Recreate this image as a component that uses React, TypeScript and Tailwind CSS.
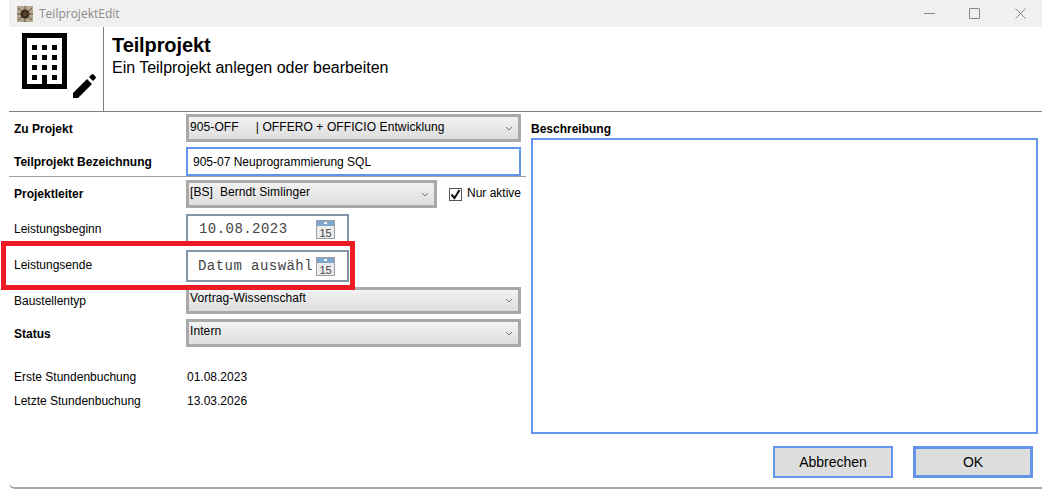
const BuildingIcon = () => (
  <svg width="78" height="68" viewBox="0 0 78 68" className="block">
    <rect x="2.5" y="2.5" width="40" height="51" fill="none" stroke="#000" strokeWidth="5" />
    <g fill="#000">
      {[12, 22, 32, 42].map(y => (
        <g key={y}>
          <rect x="10" y={y} width="5" height="5" />
          <rect x="20" y={y} width="5" height="5" />
          <rect x="30" y={y} width="5" height="5" />
        </g>
      ))}
      <rect x="20" y="42" width="5" height="13" />
    </g>
    <path d="M51 65v-5l14-14 5 5-14 14z M67 44l2.5-2.5q1-1 2 0l2 2q1 1 0 2l-2.5 2.5z" fill="#000" />
  </svg>
);

const AppIcon = () => (
  <svg width="16" height="16" viewBox="0 0 16 16" className="block">
    <rect width="16" height="16" fill="#b5a78f" />
    <circle cx="8" cy="8" r="4.5" fill="#3a2c1e" />
    <circle cx="8" cy="8" r="2" fill="#8a5a2c" />
    <path d="M1 2l14 12M15 2L1 14M8 0v16M0 8h16" stroke="#40352a" strokeWidth="1" opacity="0.7" />
  </svg>
);

const CalendarIcon = () => (
  <svg width="19" height="19" viewBox="0 0 19 19" className="block">
    <rect x="0.5" y="0.5" width="18" height="18" fill="#ececec" stroke="#9aa0a6" />
    <rect x="1" y="1" width="17" height="5" fill="#7fa6cc" />
    <rect x="8" y="2" width="3" height="2" fill="#ffffff" />
    <text x="9.5" y="16.5" textAnchor="middle" fontSize="11" fontFamily="Liberation Sans, sans-serif" fill="#444">15</text>
  </svg>
);

const Chevron = () => (
  <svg width="8" height="5" viewBox="0 0 8 5" className="block shrink-0">
    <path d="M1 1l3 3 3-3" fill="none" stroke="#777" strokeWidth="1" />
  </svg>
);

const SelectBox = ({ text, className }: { text: string; className: string }) => (
  <div className={`flex justify-between h-full border-[3px] border-[#a9a9a9] bg-gradient-to-b from-[#f2f2f2] to-[#dedede] pl-px pr-[5px] ${className}`}>
    <span className="whitespace-pre text-[12px] leading-[14px] pt-[2px] tracking-[0.09px] text-black">{text}</span>
    <span className="self-center"><Chevron /></span>
  </div>
);

const DateBox = ({ text, tight }: { text: string; tight?: boolean }) => (
  <div className={`flex items-center justify-between h-full w-[163px] border-2 border-[#8096a8] bg-white pr-[12px] ${tight ? 'pl-[10px]' : 'pl-[11px]'}`}>
    <span className="font-['Liberation_Mono',monospace] text-[14px] tracking-[0.45px] text-[#444] whitespace-pre">{text}</span>
    <span className="shrink-0"><CalendarIcon /></span>
  </div>
);

const Row = ({ label, bold, className, labelClass, children }: { label: string; bold?: boolean; className: string; labelClass?: string; children: React.ReactNode }) => (
  <div className={`flex ${className}`}>
    <div className={`w-[177px] pl-[5px] self-center text-[12px] leading-[14px] text-black ${bold ? 'font-bold' : ''} ${labelClass ?? ''}`}>{label}</div>
    <div className="flex-1 h-full min-w-0">{children}</div>
  </div>
);

export default function App() {
  return (
    <div className="relative w-[1042px] h-[490px] bg-white overflow-hidden font-['Liberation_Sans',Arial,sans-serif]">
      <div className="ml-[9px] h-[489px] flex flex-col border-b-2 border-[#a8a8a8] rounded-bl-[6px] bg-white">
        {/* title bar */}
        <div className="flex items-center h-[27px] bg-[#f0f0f0] pl-[8px] shrink-0">
          <AppIcon />
          <span className="ml-[6px] font-['Open_Sans',sans-serif] text-[12px] text-[#8a8a8a]">TeilprojektEdit</span>
          <div className="ml-auto flex items-center">
            <span className="block w-[11px] h-px bg-[#8a8a8a]" />
            <span className="block ml-[34px] w-[11px] h-[11px] rounded-[1px] border border-[#8a8a8a]" />
            <svg width="11" height="11" viewBox="0 0 11 11" className="block ml-[35px] mr-[16px]">
              <path d="M0.5 0.5l10 10M10.5 0.5l-10 10" stroke="#8a8a8a" strokeWidth="1" />
            </svg>
          </div>
        </div>

        {/* header */}
        <div className="flex h-[85px] shrink-0 border-b border-[#808080]">
          <div className="w-[95px] shrink-0 border-r border-[#808080] pl-[13px] pt-[6px]">
            <BuildingIcon />
          </div>
          <div className="pl-[8px] pt-[7px]">
            <h1 className="text-[20px] leading-[23px] font-bold tracking-[-0.1px] text-black">Teilprojekt</h1>
            <p className="text-[16px] leading-[18px] mt-[2px] tracking-[-0.02px] text-black">Ein Teilprojekt anlegen oder bearbeiten</p>
          </div>
        </div>

        {/* form */}
        <div className="flex flex-1 min-h-0">
          <div className="w-[517px] shrink-0 flex flex-col pt-[2px]">
            <Row label="Zu Projekt" bold labelClass="pt-[2px]" className="h-[28px] pr-[5px]">
              <SelectBox text="905-OFF     | OFFERO + OFFICIO Entwicklung" className="w-full pt-px" />
            </Row>
            <Row label="Teilprojekt Bezeichnung" bold className="h-[29px] mt-[5px] pr-[5px]">
              <div className="h-full border-2 border-[#6495ed] bg-white pl-[5px] flex items-center text-[12px] text-black">905-07 Neuprogrammierung SQL</div>
            </Row>
            <div className="h-px mt-0 bg-[#a0a0a0]" />
            <Row label="Projektleiter" bold className="h-[28px] mt-[3px] pr-[5px]">
              <div className="flex h-full">
                <SelectBox text="[BS]  Berndt Simlinger" className="w-[251px]" />
                <label className="flex items-center ml-[12px] text-[12px] text-black">
                  <span className="flex items-center justify-center w-[13px] h-[13px] border border-[#555] bg-white">
                    <svg width="11" height="11" viewBox="0 0 11 11"><path d="M1.5 5.5l3 3.5 5-8" fill="none" stroke="#111" strokeWidth="2" /></svg>
                  </span>
                  <span className="ml-[5px] mb-[2px]">Nur aktive</span>
                </label>
              </div>
            </Row>
            <Row label="Leistungsbeginn" className="h-[30px] mt-[6px]">
              <DateBox text="10.08.2023" />
            </Row>
            <Row label="Leistungsende" labelClass="pb-[2px]" className="h-[32px] mt-[6px]">
              <DateBox text="Datum auswähl" tight />
            </Row>
            <Row label="Baustellentyp" className="h-[27px] mt-[5px] pr-[5px]">
              <SelectBox text="Vortrag-Wissenschaft" className="w-full [&>span:first-child]:pt-px" />
            </Row>
            <Row label="Status" bold labelClass="pt-[2px]" className="h-[28px] mt-[5px] pr-[5px]">
              <SelectBox text="Intern" className="w-full" />
            </Row>
            <Row label="Erste Stundenbuchung" className="h-[16px] mt-[22px]">
              <span className="block pl-px text-[12px] leading-[16px] text-black">01.08.2023</span>
            </Row>
            <Row label="Letzte Stundenbuchung" className="h-[16px] mt-[8px]">
              <span className="block pl-px text-[12px] leading-[16px] text-black">13.03.2026</span>
            </Row>
          </div>

          <div className="flex-1 min-w-0 flex flex-col pl-[5px] pr-[4px]">
            <div className="h-[26px] flex items-end pb-[2px] text-[12px] leading-[14px] font-bold text-black">Beschreibung</div>
            <div className="h-[296px] border-2 border-[#6495ed] bg-white" />
            <div className="flex justify-end gap-[20px] mt-[12px] pr-[5px]">
              <button className="w-[120px] h-[32px] border-2 border-[#6495ed] bg-[#dddddd] text-[14px] text-black">Abbrechen</button>
              <button className="w-[120px] h-[32px] border-[3px] border-[#6495ed] bg-[#dddddd] text-[14px] text-black">OK</button>
            </div>
          </div>
        </div>
      </div>

      {/* red highlight drawn over the screenshot */}
      <div className="absolute left-[1px] top-[241px] w-[354px] h-[49px] border-[5px] border-[#ed1c24]" />
    </div>
  );
}
